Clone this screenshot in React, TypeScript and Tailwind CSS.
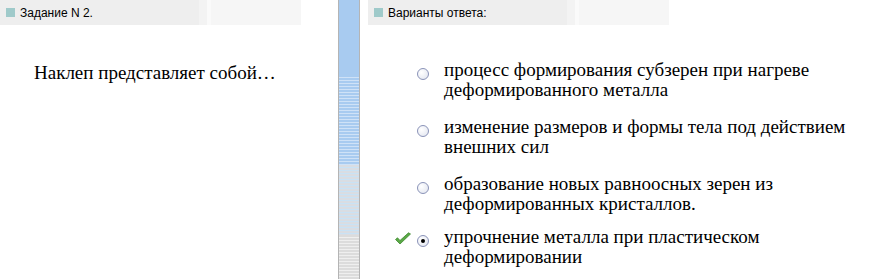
const options = [
  { text: ['процесс формирования субзерен при нагреве', 'деформированного металла'], checked: false },
  { text: ['изменение размеров и формы тела под действием', 'внешних сил'], checked: false },
  { text: ['образование новых равноосных зерен из', 'деформированных кристаллов.'], checked: false },
  { text: ['упрочнение металла при пластическом', 'деформировании'], checked: true },
];

const serif = "font-['Liberation_Serif','Times_New_Roman',serif]";

function HeaderBar({ title }: { title: string }) {
  return (
    <div className="flex h-[25px]">
      <div className="flex w-[199px] items-center bg-[#eeeeee] pl-[6px]">
        <span className="mr-[5px] h-[9px] w-[9px] bg-[#9fcaca]" />
        <span className="font-['Liberation_Sans',Arial,sans-serif] text-[12px] text-black">{title}</span>
      </div>
      <div className="w-[8px] bg-[#f3f3f3]" />
      <div className="w-[4px] bg-[#fafafa]" />
      <div className="w-[90px] bg-[#f6f6f6]" />
    </div>
  );
}

function Radio({ checked }: { checked: boolean }) {
  return (
    <span className="flex h-[12px] w-[12px] items-center justify-center rounded-full border border-[#8a93b8] bg-[radial-gradient(circle_at_35%_35%,#ffffff,#dfe3ee)]">
      {checked && <span className="h-[4px] w-[4px] rounded-full bg-black" />}
    </span>
  );
}

function Check() {
  return (
    <svg width="18" height="14" viewBox="0 0 18 14">
      <path d="M1.5 7.5 L6 12 L16.5 2 L14.5 0.8 L6 8.5 L3.5 5.8 Z" fill="#5aa846" stroke="#3f8a30" strokeWidth="0.8" strokeLinejoin="round" />
    </svg>
  );
}

export default function App() {
  return (
    <div className="flex h-[279px] w-[891px] bg-white">
      <div className="w-[338px]">
        <HeaderBar title="Задание N 2." />
        <p className={`${serif} mt-[38px] pl-[34px] text-[19px] leading-[20px] text-black`}>Наклеп представляет собой…</p>
      </div>

      <div className="flex w-[22px] flex-col border-x border-[#b4b4b4]">
        <div className="h-[75px] bg-[#a8cbf0]" />
        <div className="h-[90px] bg-[repeating-linear-gradient(to_bottom,#a8cbf0_0px,#a8cbf0_2px,#cfe2f7_2px,#cfe2f7_3px)]" />
        <div className="h-[70px] bg-[repeating-linear-gradient(to_bottom,#d9dde3_0px,#d9dde3_2px,#c9e2f5_2px,#c9e2f5_3px)]" />
        <div className="flex-1 bg-[repeating-linear-gradient(to_bottom,#dcdcdc_0px,#dcdcdc_2px,#efefef_2px,#efefef_3px)]" />
      </div>

      <div className="flex-1">
        <div className="pl-[8px]">
          <HeaderBar title="Варианты ответа:" />
        </div>
        <div className="mt-[35px] flex flex-col">
          {options.map((o, i) => (
            <div key={i} className={`flex ${i === 0 ? '' : i === 3 ? 'mt-[13px]' : 'mt-[17px]'}`}>
              <div className="flex w-[55px] justify-end pt-[5px] pr-[3px]">
                {o.checked && <Check />}
              </div>
              <div className="w-[29px] pl-[2px] pt-[8px]">
                <Radio checked={o.checked} />
              </div>
              <div>
                {o.text.map((t, j) => (
                  <div key={j} className={`${serif} text-[19px] leading-[20px] text-black`}>{t}</div>
                ))}
              </div>
            </div>
          ))}
        </div>
      </div>
    </div>
  );
}
